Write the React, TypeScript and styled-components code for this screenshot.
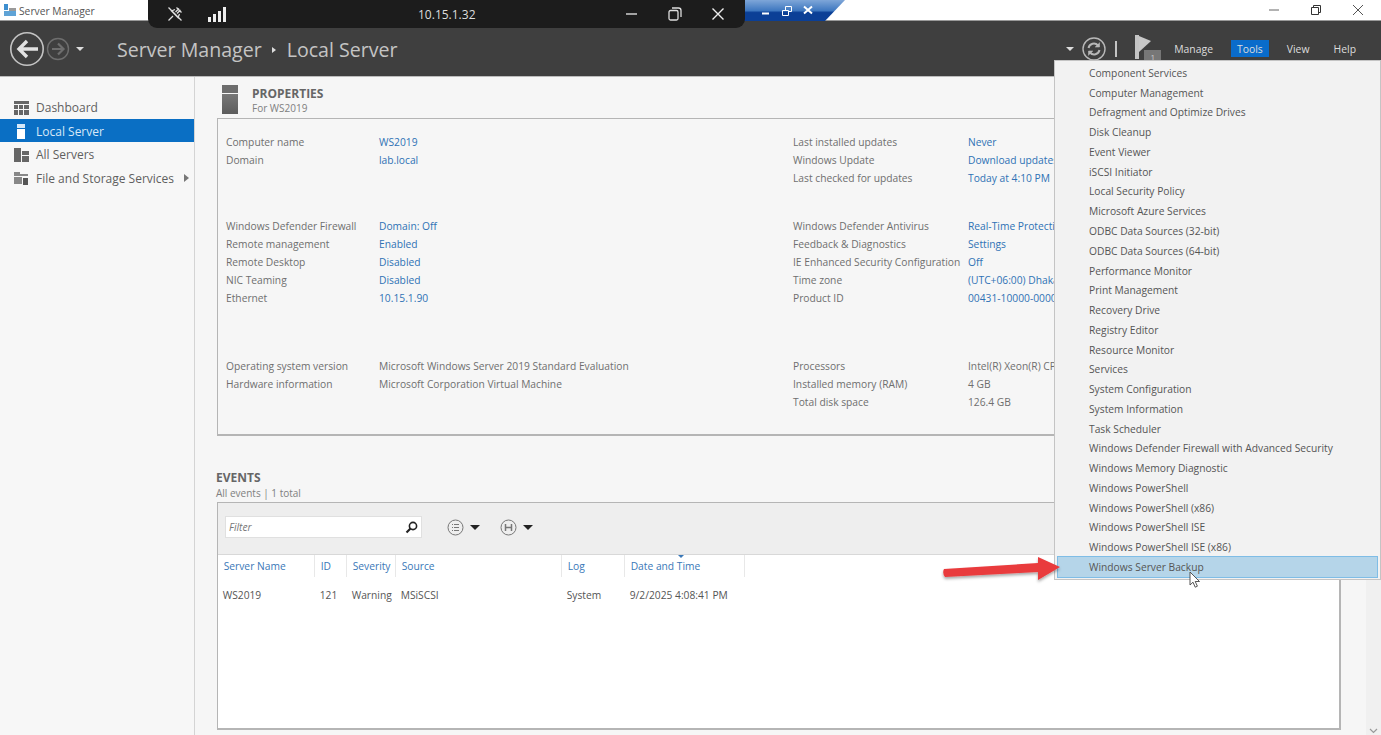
import { createGlobalStyle, styled } from "styled-components";

const GlobalStyle = createGlobalStyle`
  html, body {
    margin: 0;
    padding: 0;
    background: #f6f6f6;
    font-family: "Open Sans", "Noto Sans", "Liberation Sans", sans-serif;
  }
`;

const toolsMenu = [
  "Component Services",
  "Computer Management",
  "Defragment and Optimize Drives",
  "Disk Cleanup",
  "Event Viewer",
  "iSCSI Initiator",
  "Local Security Policy",
  "Microsoft Azure Services",
  "ODBC Data Sources (32-bit)",
  "ODBC Data Sources (64-bit)",
  "Performance Monitor",
  "Print Management",
  "Recovery Drive",
  "Registry Editor",
  "Resource Monitor",
  "Services",
  "System Configuration",
  "System Information",
  "Task Scheduler",
  "Windows Defender Firewall with Advanced Security",
  "Windows Memory Diagnostic",
  "Windows PowerShell",
  "Windows PowerShell (x86)",
  "Windows PowerShell ISE",
  "Windows PowerShell ISE (x86)",
  "Windows Server Backup",
];

const propertyGroups = [
  {
    height: 84,
    left: [
      ["Computer name", "WS2019", true],
      ["Domain", "lab.local", true],
    ],
    right: [
      ["Last installed updates", "Never", true],
      ["Windows Update", "Download updates only", true],
      ["Last checked for updates", "Today at 4:10 PM", true],
    ],
  },
  {
    height: 140,
    left: [
      ["Windows Defender Firewall", "Domain: Off", true],
      ["Remote management", "Enabled", true],
      ["Remote Desktop", "Disabled", true],
      ["NIC Teaming", "Disabled", true],
      ["Ethernet", "10.15.1.90", true],
    ],
    right: [
      ["Windows Defender Antivirus", "Real-Time Protection: On", true],
      ["Feedback & Diagnostics", "Settings", true],
      ["IE Enhanced Security Configuration", "Off", true],
      ["Time zone", "(UTC+06:00) Dhaka", true],
      ["Product ID", "00431-10000-00000-AA", true],
    ],
  },
  {
    height: 76,
    left: [
      ["Operating system version", "Microsoft Windows Server 2019 Standard Evaluation", false],
      ["Hardware information", "Microsoft Corporation Virtual Machine", false],
    ],
    right: [
      ["Processors", "Intel(R) Xeon(R) CPU", false],
      ["Installed memory (RAM)", "4 GB", false],
      ["Total disk space", "126.4 GB", false],
    ],
  },
] as { height: number; left: [string, string, boolean][]; right: [string, string, boolean][] }[];

const eventColumns = [
  { label: "Server Name", width: 97, text: "WS2019" },
  { label: "ID", width: 32, text: "121" },
  { label: "Severity", width: 49, text: "Warning" },
  { label: "Source", width: 166, text: "MSiSCSI" },
  { label: "Log", width: 63, text: "System" },
  { label: "Date and Time", width: 120, text: "9/2/2025 4:08:41 PM" },
];

function App() {
  return (
    <Page>
      <GlobalStyle />
      <TitleBar>
        <AppIcon viewBox="0 0 14 14">
          <rect x="1" y="1" width="4" height="6" fill="#3d8fd0" />
          <rect x="1" y="8" width="12" height="5" fill="#5fa3d6" />
          <rect x="6" y="5" width="7" height="3" fill="#9a9a9a" />
        </AppIcon>
        <AppTitle>Server Manager</AppTitle>
        <WindowButtons>
          <svg width="12" height="12" viewBox="0 0 12 12">
            <path d="M1 6h10" stroke="#666" />
          </svg>
          <svg width="12" height="12" viewBox="0 0 12 12" fill="none" stroke="#333">
            <path d="M1.5 3.5h7v7h-7zM3.5 3.5v-2h7v7h-2" />
          </svg>
          <svg width="12" height="12" viewBox="0 0 12 12">
            <path d="M1 1l10 10M11 1L1 11" stroke="#555" />
          </svg>
        </WindowButtons>
      </TitleBar>

      <HiddenWindowTab>
        <svg width="12" height="12" viewBox="0 0 12 12">
          <path d="M2 8.5h7" stroke="#fff" strokeWidth="2" />
        </svg>
        <svg width="12" height="12" viewBox="0 0 12 12" fill="none" stroke="#fff">
          <path d="M1.5 5.5h6v5h-6zM4.5 5V1.5h6v5H8" />
        </svg>
        <svg width="12" height="12" viewBox="0 0 12 12">
          <path d="M2 1.5l8 7M10 1.5l-8 7" stroke="#fff" strokeWidth="2" />
        </svg>
      </HiddenWindowTab>

      <RemoteBar>
        <RemoteLeft>
          <svg width="18" height="18" viewBox="0 0 18 18" fill="none" stroke="#ddd" strokeWidth="1.3">
            <path d="M2.5 2.5l13 13M10.5 2.5l5 5M9 4.5l-3.5 1.5 6.5 6.5L13.5 9M7 11l-4.5 4.5M13 3.5L9.5 7M14.5 5L11 8.5" />
          </svg>
          <SignalBars>
            <SignalBar $height={5} />
            <SignalBar $height={8} />
            <SignalBar $height={11} />
            <SignalBar $height={15} />
          </SignalBars>
        </RemoteLeft>
        <RemoteAddress>10.15.1.32</RemoteAddress>
        <RemoteButtons>
          <svg width="16" height="16" viewBox="0 0 16 16">
            <path d="M2 8h11" stroke="#ddd" strokeWidth="1.4" />
          </svg>
          <svg width="16" height="16" viewBox="0 0 16 16" fill="none" stroke="#ddd" strokeWidth="1.3">
            <rect x="2" y="4.5" width="9" height="9.5" rx="1.5" />
            <path d="M5 2h6.5A2.5 2.5 0 0 1 14 4.5V11" />
          </svg>
          <svg width="16" height="16" viewBox="0 0 16 16">
            <path d="M2.5 2.5l11 11M13.5 2.5l-11 11" stroke="#eee" strokeWidth="1.4" />
          </svg>
        </RemoteButtons>
      </RemoteBar>

      <Header>
        <NavGroup>
          <svg width="36" height="36" viewBox="0 0 36 36" fill="none">
            <circle cx="18" cy="18" r="16.2" stroke="#c4c4c4" strokeWidth="1.6" />
            <path d="M29 18H10M18 10l-8 8 8 8" stroke="#e2e2e2" strokeWidth="3.4" />
          </svg>
          <svg width="24" height="24" viewBox="0 0 24 24" fill="none">
            <circle cx="12" cy="12" r="10.5" stroke="#6e6e6e" strokeWidth="1.4" />
            <path d="M6 12h11M12 6.5l5.5 5.5-5.5 5.5" stroke="#6e6e6e" strokeWidth="2.2" />
          </svg>
          <DownCaret $color="#ddd" />
        </NavGroup>
        <Breadcrumb>
          Server Manager
          <BreadcrumbCaret />
          Local Server
        </Breadcrumb>
        <HeaderRight>
          <DownCaret $color="#ddd" />
          <svg width="24" height="24" viewBox="0 0 24 24" fill="none" stroke="#b8b8b8">
            <circle cx="12" cy="12" r="11" strokeWidth="1.4" />
            <path d="M6.5 11a5.5 5.5 0 0 1 9.5-2.5M17.5 13a5.5 5.5 0 0 1-9.5 2.5" strokeWidth="2" />
            <path d="M17.5 5.5v4.5h-4.5M6.5 18.5V14H11" fill="#b8b8b8" strokeWidth="0.6" />
          </svg>
          <HeaderDivider />
          <FlagBadge>
            <svg width="26" height="26" viewBox="0 0 26 26">
              <path d="M0 0h4v24H0z" fill="#c4c4c4" />
              <path d="M4 1l12 5-12 11z" fill="#c8c8c8" />
            </svg>
            <FlagCount>1</FlagCount>
          </FlagBadge>
          <MenuLabels>
            <MenuLabel>Manage</MenuLabel>
            <MenuLabel $active>Tools</MenuLabel>
            <MenuLabel>View</MenuLabel>
            <MenuLabel>Help</MenuLabel>
          </MenuLabels>
        </HeaderRight>
      </Header>

      <Body>
        <Sidebar>
          <SideItem>
            <svg width="15" height="14" viewBox="0 0 15 14" fill="#666">
              <path d="M0 0h15v3H0zM0 4h4v4H0zM5 4h4v4H5zM10 4h5v4h-5zM0 9h4v5H0zM5 9h4v5H5zM10 9h5v5h-5z" />
            </svg>
            Dashboard
          </SideItem>
          <SideItem $selected>
            <svg width="15" height="16" viewBox="0 0 15 16" fill="#fff">
              <path d="M3 1h8v4H3z" fill="#d5e8f8" />
              <path d="M3 6h8v10H3z" />
            </svg>
            Local Server
          </SideItem>
          <SideItem>
            <svg width="15" height="14" viewBox="0 0 15 14" fill="#666">
              <path d="M0 0h7v14H0zM8 3h7v4H8zM8 8h7v6H8z" />
            </svg>
            All Servers
          </SideItem>
          <SideItem>
            <svg width="15" height="14" viewBox="0 0 15 14" fill="#888">
              <path d="M0 1h6v2h8v2H0zM0 6h8v7H0z" />
              <path d="M9 7h5v7H9z" fill="#555" />
            </svg>
            File and Storage Services
            <SideCaret />
          </SideItem>
        </Sidebar>

        <Main>
          <PropertiesHeading>
            <ServerGlyph>
              <ServerTop />
              <ServerBody />
            </ServerGlyph>
            <HeadingText>
              <SectionTitle>PROPERTIES</SectionTitle>
              <SectionSub>For WS2019</SectionSub>
            </HeadingText>
          </PropertiesHeading>

          <PropertiesBox>
            {propertyGroups.map((group) => (
              <PropertyGroup key={group.left[0][0]} $height={group.height}>
                <PropertyColumn>
                  {group.left.map(([label, value, link]) => (
                    <PropertyRow key={label}>
                      <PropertyLabel $width={153}>{label}</PropertyLabel>
                      <PropertyValue $link={link}>{value}</PropertyValue>
                    </PropertyRow>
                  ))}
                </PropertyColumn>
                <PropertyColumn>
                  {group.right.map(([label, value, link]) => (
                    <PropertyRow key={label}>
                      <PropertyLabel $width={175}>{label}</PropertyLabel>
                      <PropertyValue $link={link}>{value}</PropertyValue>
                    </PropertyRow>
                  ))}
                </PropertyColumn>
              </PropertyGroup>
            ))}
          </PropertiesBox>

          <EventsHeading>
            <SectionTitle>EVENTS</SectionTitle>
            <SectionSub>All events | 1 total</SectionSub>
          </EventsHeading>

          <EventsBox>
            <EventsToolbar>
              <FilterBox>
                <FilterHint>Filter</FilterHint>
                <svg width="13" height="13" viewBox="0 0 13 13" fill="none" stroke="#222">
                  <circle cx="8" cy="5" r="3.6" strokeWidth="1.6" />
                  <path d="M5.5 7.5L1.5 11.5" strokeWidth="2.2" />
                </svg>
              </FilterBox>
              <ToolButton>
                <svg width="17" height="17" viewBox="0 0 17 17" fill="none" stroke="#777">
                  <circle cx="8.5" cy="8.5" r="7.5" />
                  <path d="M5 5.5h1M5 8.5h1M5 11.5h1M7 5.5h5M7 8.5h5M7 11.5h5" strokeWidth="1.2" />
                </svg>
                <ToolCaret />
              </ToolButton>
              <ToolButton>
                <svg width="17" height="17" viewBox="0 0 17 17" fill="none" stroke="#777">
                  <circle cx="8.5" cy="8.5" r="7.5" />
                  <path d="M5.5 5v7M11.5 5v7M5.5 8.5h6" strokeWidth="1.5" />
                </svg>
                <ToolCaret />
              </ToolButton>
            </EventsToolbar>
            <EventsHeader>
              {eventColumns.map((col) => (
                <HeaderCell key={col.label} $width={col.width}>
                  {col.label}
                  {col.label === "Date and Time" && <SortMark />}
                </HeaderCell>
              ))}
            </EventsHeader>
            <EventsRow>
              {eventColumns.map((col) => (
                <EventCell key={col.label} $width={col.width}>
                  {col.text}
                </EventCell>
              ))}
            </EventsRow>
          </EventsBox>
        </Main>

        <ScrollTrack>
          <svg width="9" height="6" viewBox="0 0 9 6" fill="none" stroke="#999" strokeWidth="1.2">
            <path d="M1 1l3.5 3.5L8 1" />
          </svg>
        </ScrollTrack>
      </Body>

      <ToolsDropdown>
        {toolsMenu.map((item) => (
          <ToolsItem key={item} $hover={item === "Windows Server Backup"}>
            {item}
          </ToolsItem>
        ))}
      </ToolsDropdown>

      <RedArrow width="125" height="40" viewBox="0 0 125 40">
        <defs>
          <filter id="arrowShadow" x="-10%" y="-30%" width="120%" height="170%">
            <feDropShadow dx="0" dy="2" stdDeviation="1.5" floodColor="#000" floodOpacity="0.35" />
          </filter>
        </defs>
        <path
          d="M3 20L97 14V8L119 18L97 31V23L4 28Q1 24 3 20Z"
          fill="#e93a3c"
          filter="url(#arrowShadow)"
        />
      </RedArrow>

      <MouseCursor width="12" height="18" viewBox="0 0 12 18">
        <path d="M1 1v13l3-2.8 2.2 5 2.2-1-2.2-4.7H10.5z" fill="#fff" stroke="#444" strokeWidth="0.9" />
      </MouseCursor>
    </Page>
  );
}

const Page = styled.div`
  position: relative;
  width: 1381px;
  height: 735px;
  overflow: hidden;
  display: flex;
  flex-direction: column;
  background: #f6f6f6;
  color: #666;
  font-size: 11px;
`;

const TitleBar = styled.div`
  height: 21px;
  flex: none;
  display: flex;
  align-items: center;
  padding-left: 3px;
  background: #fff;
  border-bottom: 1px solid #9a9a9a;
  box-sizing: border-box;
`;

const AppIcon = styled.svg`
  width: 14px;
  height: 14px;
  margin-right: 2px;
`;

const AppTitle = styled.span`
  padding-top: 1px;
  font-size: 10.25px;
  color: #555;
`;

const WindowButtons = styled.div`
  margin-left: auto;
  display: flex;
  gap: 30px;
  padding-right: 17px;
`;

const HiddenWindowTab = styled.div`
  position: absolute;
  top: 0;
  left: 720px;
  width: 125px;
  height: 21px;
  display: flex;
  align-items: center;
  gap: 9px;
  padding-left: 40px;
  box-sizing: border-box;
  background: linear-gradient(#7ea6d8, #3f78c0 50%, #0b3f96 60%);
  clip-path: polygon(0 0, 100% 0, 84% 100%, 0 100%);
`;

const RemoteBar = styled.div`
  position: absolute;
  top: 0;
  left: 148px;
  width: 597px;
  height: 28px;
  display: flex;
  align-items: center;
  background: #1c1c1c;
  border-radius: 0 0 9px 9px;
  color: #ddd;
`;

const RemoteLeft = styled.div`
  display: flex;
  align-items: center;
  gap: 24px;
  padding-left: 18px;
`;

const SignalBars = styled.div`
  display: flex;
  align-items: flex-end;
  gap: 2px;
`;

const SignalBar = styled.span<{ $height: number }>`
  width: 3px;
  height: ${(p) => p.$height}px;
  background: #eee;
`;

const RemoteAddress = styled.span`
  position: absolute;
  left: 270px;
  font-size: 12px;
`;

const RemoteButtons = styled.div`
  margin-left: auto;
  display: flex;
  gap: 27px;
  padding-right: 19px;
`;

const Header = styled.div`
  height: 56px;
  flex: none;
  display: flex;
  align-items: center;
  background: #3f3f3f;
  border-bottom: 1px solid #bbb;
  box-sizing: border-box;
  padding-left: 9px;
`;

const NavGroup = styled.div`
  display: flex;
  align-items: center;
  gap: 1px;
  width: 108px;
`;

const DownCaret = styled.span<{ $color: string }>`
  width: 0;
  height: 0;
  margin-left: 5px;
  border-left: 4px solid transparent;
  border-right: 4px solid transparent;
  border-top: 4px solid ${(p) => p.$color};
`;

const Breadcrumb = styled.div`
  display: flex;
  align-items: center;
  padding-top: 2px;
  font-size: 19.6px;
  color: #c4c4c4;
`;

const BreadcrumbCaret = styled.span`
  width: 0;
  height: 0;
  margin: 0 11px 0 10px;
  border-top: 3.5px solid transparent;
  border-bottom: 3.5px solid transparent;
  border-left: 4px solid #ddd;
`;

const HeaderRight = styled.div`
  margin-left: auto;
  display: flex;
  align-items: center;
  gap: 8px;
  padding-right: 19px;
`;

const HeaderDivider = styled.span`
  width: 2px;
  height: 16px;
  margin: 0 10px 0 1px;
  background: #c4c4c4;
`;

const FlagBadge = styled.div`
  position: relative;
  width: 26px;
  height: 26px;
  margin-top: -1px;
`;

const FlagCount = styled.span`
  position: absolute;
  left: 9px;
  bottom: -1px;
  width: 17px;
  height: 12px;
  background: #777;
  color: #ccc;
  font-size: 8px;
  line-height: 14px;
  text-align: center;
`;

const MenuLabels = styled.div`
  display: flex;
  align-items: center;
  gap: 12px;
  margin-left: -1px;
`;

const MenuLabel = styled.span<{ $active?: boolean }>`
  padding: 0 6px;
  height: 17px;
  line-height: 19px;
  font-size: 10.4px;
  color: #ddd;
  background: ${(p) => (p.$active ? "#0a6ccb" : "transparent")};
`;

const Body = styled.div`
  flex: 1;
  display: flex;
  min-height: 0;
`;

const Sidebar = styled.div`
  width: 195px;
  flex: none;
  padding-top: 18px;
  box-sizing: border-box;
  border-right: 1px solid #d4d4d4;
  background: #f7f7f7;
`;

const SideItem = styled.div<{ $selected?: boolean }>`
  display: flex;
  align-items: center;
  gap: 7px;
  width: 194px;
  height: 23.5px;
  padding: 2px 0 0 14px;
  box-sizing: border-box;
  font-size: 12px;
  color: ${(p) => (p.$selected ? "#d8e8f7" : "#5f5f5f")};
  background: ${(p) => (p.$selected ? "#0a6fc4" : "transparent")};
`;

const SideCaret = styled.span`
  width: 0;
  height: 0;
  margin-left: 3px;
  border-top: 4px solid transparent;
  border-bottom: 4px solid transparent;
  border-left: 5px solid #777;
`;

const Main = styled.div`
  flex: 1;
  display: flex;
  flex-direction: column;
  min-width: 0;
  padding: 8px 25px 0 22px;
`;

const ScrollTrack = styled.div`
  width: 15px;
  flex: none;
  display: flex;
  align-items: flex-end;
  justify-content: center;
  padding-bottom: 1px;
  box-sizing: border-box;
  background: #f0f0f0;
`;

const PropertiesHeading = styled.div`
  display: flex;
  gap: 14px;
  padding-left: 5px;
  height: 33px;
`;

const ServerGlyph = styled.div`
  display: flex;
  flex-direction: column;
  gap: 1px;
  width: 16px;
`;

const ServerTop = styled.div`
  height: 8px;
  background: #6d6d6d;
`;

const ServerBody = styled.div`
  height: 20px;
  background: linear-gradient(#777, #5c5c5c);
`;

const HeadingText = styled.div`
  display: flex;
  flex-direction: column;
  margin-top: 1px;
`;

const SectionTitle = styled.div`
  font-size: 12px;
  line-height: 15px;
  font-weight: 700;
  color: #666;
`;

const SectionSub = styled.div`
  font-size: 10px;
  line-height: 15px;
  color: #808080;
`;

const PropertiesBox = styled.div`
  height: 318px;
  flex: none;
  padding: 14px 0 0 8px;
  box-sizing: border-box;
  border: 1px solid #b5b5b5;
  border-bottom-width: 2px;
`;

const PropertyGroup = styled.div<{ $height: number }>`
  display: grid;
  grid-template-columns: 567px 1fr;
  height: ${(p) => p.$height}px;
`;

const PropertyColumn = styled.div`
  display: flex;
  flex-direction: column;
`;

const PropertyRow = styled.div`
  display: flex;
  height: 18px;
  align-items: center;
  white-space: nowrap;
  font-size: 10.25px;
`;

const PropertyLabel = styled.span<{ $width: number }>`
  width: ${(p) => p.$width}px;
  flex: none;
  color: #6f6f6f;
`;

const PropertyValue = styled.span<{ $link: boolean }>`
  color: ${(p) => (p.$link ? "#2f72b5" : "#6f6f6f")};
`;

const EventsHeading = styled.div`
  margin: 34px 0 0 -1px;
  height: 32px;

  ${SectionSub} {
    margin-top: 1px;
  }
`;

const EventsBox = styled.div`
  flex: 1;
  margin-bottom: 5px;
  border: 1px solid #b5b5b5;
  border-right-width: 2px;
  border-bottom-width: 2px;
  background: #fff;
`;

const EventsToolbar = styled.div`
  height: 52px;
  display: flex;
  align-items: center;
  gap: 25px;
  padding: 0 8px 3px 7px;
  box-sizing: border-box;
  background: #eeeeee;
  border-bottom: 1px solid #d8d8d8;
`;

const FilterBox = styled.div`
  width: 197px;
  height: 22px;
  display: flex;
  align-items: center;
  justify-content: space-between;
  padding: 0 3px;
  box-sizing: border-box;
  background: #fff;
  border: 1px solid #e0e0e0;
`;

const FilterHint = styled.span`
  font-style: italic;
  font-size: 10.25px;
  color: #777;
`;

const ToolButton = styled.div`
  display: flex;
  align-items: center;
  gap: 6px;
  margin-right: -5px;
`;

const ToolCaret = styled.span`
  width: 0;
  height: 0;
  border-left: 5px solid transparent;
  border-right: 5px solid transparent;
  border-top: 5px solid #222;
`;

const EventsHeader = styled.div`
  display: flex;
  height: 22px;
`;

const HeaderCell = styled.div<{ $width: number }>`
  position: relative;
  width: ${(p) => p.$width}px;
  flex: none;
  display: flex;
  align-items: center;
  padding-left: 5.7px;
  box-sizing: border-box;
  border-right: 1px solid #e8e8e8;
  font-size: 10.25px;
  white-space: nowrap;
  color: #3a78b8;
`;

const SortMark = styled.span`
  position: absolute;
  top: 0;
  left: 53px;
  border-left: 3px solid transparent;
  border-right: 3px solid transparent;
  border-top: 3px solid #3a78b8;
`;

const EventsRow = styled.div`
  display: flex;
  margin-top: 7px;
  height: 22px;
`;

const EventCell = styled.div<{ $width: number }>`
  width: ${(p) => p.$width}px;
  flex: none;
  display: flex;
  align-items: center;
  padding-left: 4.7px;
  box-sizing: border-box;
  font-size: 10.25px;
  white-space: nowrap;
  color: #555;
`;

const ToolsDropdown = styled.div`
  position: absolute;
  top: 60px;
  left: 1054px;
  width: 327px;
  height: 520px;
  padding-top: 2px;
  box-sizing: border-box;
  background: #f2f2f2;
  border: 1px solid #c4c4c4;
`;

const ToolsItem = styled.div<{ $hover: boolean }>`
  height: 19.78px;
  margin: 0 3px;
  display: flex;
  align-items: center;
  padding-left: 31px;
  box-sizing: border-box;
  font-size: 10.25px;
  white-space: nowrap;
  color: #555;
  background: ${(p) => (p.$hover ? "#b5d5e9" : "transparent")};
  outline: ${(p) => (p.$hover ? "1px solid #7fbde6" : "none")};
`;

const RedArrow = styled.svg`
  position: absolute;
  left: 941px;
  top: 549px;
`;

const MouseCursor = styled.svg`
  position: absolute;
  left: 1189px;
  top: 571px;
`;

export default App;
